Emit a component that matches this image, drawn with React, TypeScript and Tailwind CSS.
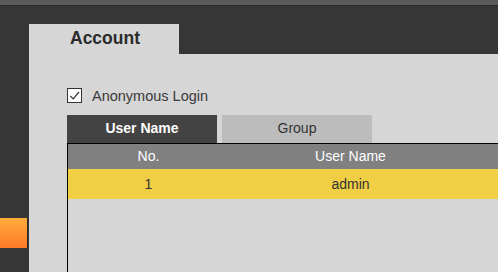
import React from "react";

export default function App() {
  return (
    <div
      className="w-[498px] h-[272px] overflow-hidden bg-[#363636] flex flex-col"
      style={{ fontFamily: '"Liberation Sans", Arial, sans-serif' }}
    >
      <div className="h-[5px] bg-[#5b5b5b] shrink-0" />
      <div className="h-[1px] bg-[#2c2c2c] shrink-0" />
      <div className="flex flex-1 min-h-0">
        <div className="w-[29px] shrink-0 pt-[212px]">
          <div className="w-[28px] h-[30px] border-r border-[#2a2a2a] bg-gradient-to-b from-[#ffab3c] to-[#ff7a28]" />
        </div>
        <div className="flex-1 flex flex-col min-w-0">
          <div className="pt-[18px] flex shrink-0">
            <div className="w-[150px] h-[30px] bg-[#d6d6d6] pl-[41px] pt-[4px] text-[17.5px] font-bold text-[#2b2b2b] leading-[20px]">
              Account
            </div>
          </div>
          <div className="flex-1 bg-[#d6d6d6] pl-[38px] pt-[34px] flex flex-col min-h-0">
            <div className="flex items-center h-[15px]">
              <div className="w-[15px] h-[15px] border border-[#333] bg-white flex items-center justify-center">
                <svg width="13" height="13" viewBox="0 0 13 13">
                  <path d="M2.2 6.8 L5.2 9.8 L11 3" fill="none" stroke="#333" strokeWidth="1.2" />
                </svg>
              </div>
              <span className="ml-[10px] text-[14.5px] text-[#3a3a3a] leading-[16px]">Anonymous Login</span>
            </div>
            <div className="flex mt-[12px] h-[28px] shrink-0">
              <div className="w-[150px] bg-[#434343] text-white font-bold text-[14px] flex items-center justify-center pb-[2px]">
                User Name
              </div>
              <div className="w-[5px]" />
              <div className="w-[150px] bg-[#bcbcbc] text-[#333] text-[14px] flex items-center justify-center pb-[1px]">
                Group
              </div>
            </div>
            <div className="flex-1 border-t border-l border-black flex flex-col w-[500px]">
              <div className="flex h-[25px] bg-[#808080] text-white text-[14px] shrink-0">
                <div className="w-[161px] flex items-center justify-center">No.</div>
                <div className="w-[243px] flex items-center justify-center">User Name</div>
                <div className="flex-1" />
              </div>
              <div className="flex h-[30px] bg-[#f1cf45] text-[#333] text-[14px] shrink-0">
                <div className="w-[161px] flex items-center justify-center">1</div>
                <div className="w-[243px] flex items-center justify-center">admin</div>
                <div className="flex-1" />
              </div>
              <div className="flex-1" />
            </div>
          </div>
        </div>
      </div>
    </div>
  );
}
